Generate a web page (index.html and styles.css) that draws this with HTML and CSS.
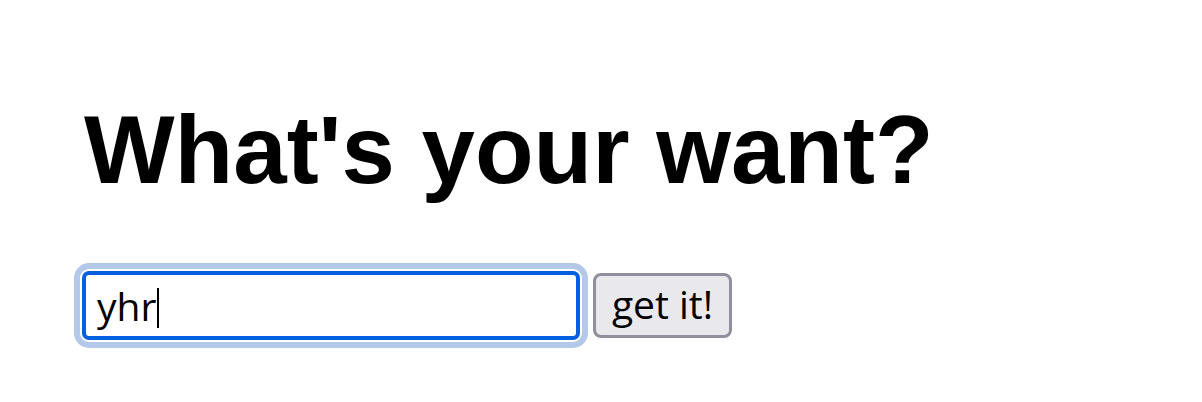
FILE: index.html
```html
<!DOCTYPE html>
<html lang="en">
<head>
<meta charset="utf-8">
<title>What's your want?</title>
<link rel="stylesheet" href="styles.css">
</head>
<body>
<main class="page">
  <h1 class="title">What's your want?</h1>
  <form class="want-form" onsubmit="return false">
    <div class="field" role="textbox" aria-label="want"><span class="field-text">yhr</span><span class="caret"></span></div>
    <button class="submit" type="submit">get it!</button>
  </form>
</main>
</body>
</html>
```

FILE: styles.css
```css
html, body {
  margin: 0;
  padding: 0;
  background: #ffffff;
}

body {
  min-height: 100vh;
}

.page {
  padding: 95px 0 40px 82px;
}

.title {
  margin: 0 0 66px 2px;
  font-family: "Liberation Sans", Arial, sans-serif;
  font-weight: bold;
  font-size: 96px;
  line-height: 110px;
  color: #000000;
}

.want-form {
  display: flex;
  align-items: center;
  gap: 13px;
}

.field {
  box-sizing: border-box;
  width: 498px;
  height: 69px;
  border: 4px solid #0060df;
  border-radius: 7px;
  box-shadow: 0 0 0 2px #ffffff, 0 0 0 8px #b4c8ea;
  padding: 0 0 0 11px;
  display: flex;
  align-items: center;
  font-family: "Open Sans", "Noto Sans", sans-serif;
  font-size: 39px;
  color: #000000;
}

.field-text {
  line-height: 1;
}

.caret {
  display: inline-block;
  width: 2px;
  height: 40px;
  background: #000000;
  margin-left: 1px;
  margin-top: 4px;
}

.submit {
  box-sizing: border-box;
  width: 139px;
  height: 65px;
  border: 3px solid #8f8f9d;
  border-radius: 8px;
  background: #e9e9ed;
  color: #000000;
  font-family: "Open Sans", "Noto Sans", sans-serif;
  font-size: 39px;
  padding: 0 0 4px 0;
}
```
